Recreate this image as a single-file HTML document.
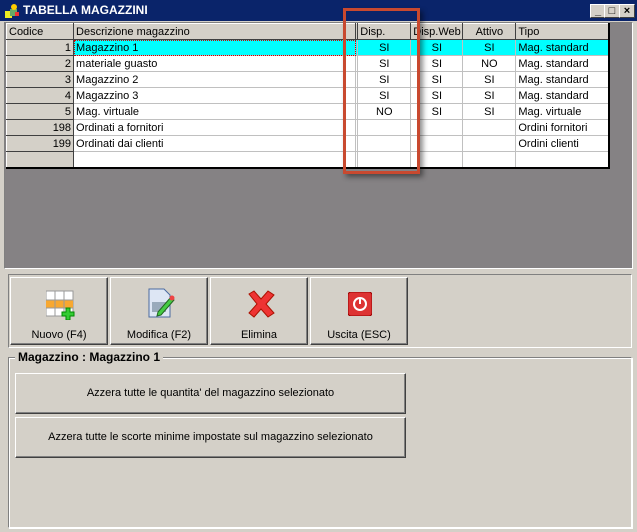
<!DOCTYPE html>
<html><head><style>
*{margin:0;padding:0;box-sizing:border-box}
body{width:637px;height:532px;background:#d4d0c8;font-family:"Liberation Sans",sans-serif;font-size:11px;position:relative;overflow:hidden}
.abs{position:absolute}
.title{left:0;top:0;width:637px;height:21px;background:#0a246a;color:#fff;font-weight:bold;font-size:12px;line-height:21px;padding-left:23px}
.wb{top:4px;width:16px;height:14px;background:#d4d0c8;border:1px solid;border-color:#fff #404040 #404040 #fff;font-size:11px;line-height:12px;text-align:center;color:#000;font-weight:bold}
.grey{left:4px;top:22px;width:629px;height:247px;background:#858284;border:1px solid;border-color:#808080 #fff #fff #808080}
table{position:absolute;left:6px;top:23px;border-collapse:collapse;background:#fff;border-right:2px solid #000;border-bottom:2px solid #000;table-layout:fixed;width:604px}
td{height:16px;border:1px solid #c0c0c0;padding:0 2px;white-space:nowrap;overflow:hidden;font-size:11px;line-height:14px}
tr.h td{background:#d4d0c8;border:1px solid;border-color:#fff #404040 #404040 #fff}
td.c{background:#d4d0c8;text-align:right;border-color:#fff #404040 #404040 #fff}
td.m{text-align:center}
tr.s td:not(.c){background:#0ff}
.btn{background:#d4d0c8;border:1px solid;border-color:#fff #404040 #404040 #fff;box-shadow:inset -1px -1px #808080;text-align:center;font-size:11px}
</style></head><body>
<div class="abs title">TABELLA MAGAZZINI</div>
<svg class="abs" style="left:4px;top:3px" width="16" height="16"><rect x="1" y="8" width="7" height="7" fill="#ee2"/><rect x="6" y="6" width="7" height="7" fill="#6a6"/><circle cx="10" cy="4" r="3" fill="#fc0"/><rect x="11" y="9" width="4" height="4" fill="#e33"/></svg>
<div class="abs wb" style="left:590px">_</div>
<div class="abs wb" style="left:604px">□</div>
<div class="abs wb" style="left:619px">×</div>
<div class="abs grey"></div>
<table>
<colgroup><col style="width:67px"><col style="width:282px"><col style="width:2px"><col style="width:53px"><col style="width:52px"><col style="width:53px"><col style="width:93px"></colgroup>
<tr class="h"><td>Codice</td><td>Descrizione magazzino</td><td style="padding:0"></td><td>Disp.</td><td>Disp.Web</td><td class="m">Attivo</td><td>Tipo</td></tr>
<tr class="s"><td class="c">1</td><td style="outline:1px dotted #c00;outline-offset:-1px">Magazzino 1</td><td></td><td class="m">SI</td><td class="m">SI</td><td class="m">SI</td><td>Mag. standard</td></tr>
<tr><td class="c">2</td><td>materiale guasto</td><td></td><td class="m">SI</td><td class="m">SI</td><td class="m">NO</td><td>Mag. standard</td></tr>
<tr><td class="c">3</td><td>Magazzino 2</td><td></td><td class="m">SI</td><td class="m">SI</td><td class="m">SI</td><td>Mag. standard</td></tr>
<tr><td class="c">4</td><td>Magazzino 3</td><td></td><td class="m">SI</td><td class="m">SI</td><td class="m">SI</td><td>Mag. standard</td></tr>
<tr><td class="c">5</td><td>Mag. virtuale</td><td></td><td class="m">NO</td><td class="m">SI</td><td class="m">SI</td><td>Mag. virtuale</td></tr>
<tr><td class="c">198</td><td>Ordinati a fornitori</td><td></td><td></td><td></td><td></td><td>Ordini fornitori</td></tr>
<tr><td class="c">199</td><td>Ordinati dai clienti</td><td></td><td></td><td></td><td></td><td>Ordini clienti</td></tr>
<tr><td class="c"></td><td></td><td></td><td></td><td></td><td></td><td></td></tr>
</table>
<div class="abs" style="left:343px;top:8px;width:77px;height:166px;border:3px solid #c8492f;box-shadow:3px 3px 5px rgba(0,0,0,.45)"></div>
<div class="abs" style="left:8px;top:274px;width:624px;height:74px;border:1px solid;border-color:#808080 #fff #fff #808080"></div>
<div class="abs btn" style="left:10px;top:277px;width:98px;height:68px;padding-top:51px">Nuovo (F4)</div>
<div class="abs btn" style="left:110px;top:277px;width:98px;height:68px;padding-top:51px">Modifica (F2)</div>
<div class="abs btn" style="left:210px;top:277px;width:98px;height:68px;padding-top:51px">Elimina</div>
<div class="abs btn" style="left:310px;top:277px;width:98px;height:68px;padding-top:51px">Uscita (ESC)</div>
<svg class="abs" style="left:46px;top:290px" width="30" height="30"><rect x="0" y="1" width="27" height="25" fill="#fff" stroke="#999"/><rect x="0" y="10" width="27" height="8" fill="#f8a830"/><path d="M9 1v25M18 1v25M0 10h27M0 18h27" stroke="#999"/><path d="M20 18h4v4h4v4h-4v4h-4v-4h-4v-4h4z" fill="#3c3" stroke="#080"/></svg>
<svg class="abs" style="left:148px;top:288px" width="28" height="32"><path d="M1 1h15l6 6v22H1z" fill="#dde6f4" stroke="#4a6aa0"/><rect x="4" y="14" width="14" height="10" fill="#9ab"/><path d="M10 24l13-15 3 3-13 15-4 1z" fill="#4c4" stroke="#262"/><circle cx="24" cy="10" r="2.5" fill="#e44"/></svg>
<svg class="abs" style="left:246px;top:290px" width="30" height="28"><path d="M3 4l5-3 7 8 7-8 6 4-8 9 8 9-6 4-7-8-7 8-5-4 8-9z" fill="#e33" stroke="#a10"/></svg>
<svg class="abs" style="left:348px;top:292px" width="24" height="24"><rect x="0" y="0" width="24" height="24" rx="3" fill="#d33" stroke="#900"/><circle cx="12" cy="12" r="6" fill="none" stroke="#fff" stroke-width="2"/><path d="M12 6v6" stroke="#fff" stroke-width="2"/></svg>
<div class="abs" style="left:8px;top:357px;width:624px;height:171px;border:1px solid;border-color:#808080 #fff #fff #808080;box-shadow:inset 1px 1px #fff,1px 1px #fff"></div>
<div class="abs" style="left:15px;top:350px;padding:0 3px;background:#d4d0c8;font-weight:bold;font-size:12px">Magazzino : Magazzino 1</div>
<div class="abs btn" style="left:15px;top:373px;width:391px;height:41px;line-height:39px">Azzera tutte le quantita' del magazzino selezionato</div>
<div class="abs btn" style="left:15px;top:417px;width:391px;height:41px;line-height:39px">Azzera tutte le scorte minime impostate sul magazzino selezionato</div>
</body></html>
